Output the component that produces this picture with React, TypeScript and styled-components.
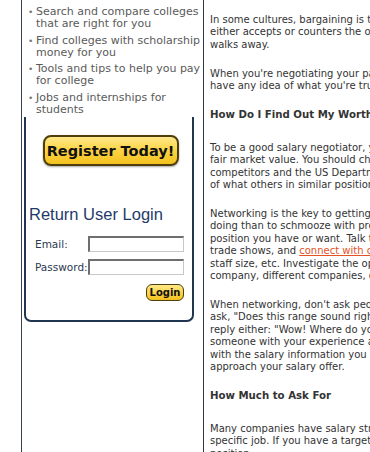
import React from "react";
import styled, { createGlobalStyle } from "styled-components";

const GlobalStyle = createGlobalStyle`
  html, body {
    margin: 0;
    padding: 0;
    background: #ffffff;
    overflow: hidden;
  }
  body {
    font-family: "DejaVu Sans", Verdana, sans-serif;
  }
`;

const Page = styled.div`
  display: flex;
  align-items: stretch;
  width: 700px;
  height: 452px;
  padding-left: 21px;
`;

const Sidebar = styled.div`
  width: 177px;
  flex-shrink: 0;
  border-left: 1px solid #3a4250;
  padding-left: 2px;
  display: flex;
  flex-direction: column;
`;

const PerkList = styled.ul`
  list-style: none;
  margin: 6px 0 0;
  padding: 0 0 0 4px;
`;

const Perk = styled.li`
  position: relative;
  padding-left: 8px;
  margin-bottom: 4.5px;
  font-size: 11px;
  line-height: 12px;
  color: #5a5a5a;

  &::before {
    content: "•";
    position: absolute;
    left: 0;
    top: 0;
    font-size: 9px;
    color: #777;
  }
`;

const LoginBox = styled.div`
  margin-top: -3px;
  width: 166px;
  border: 2.5px solid #1f3550;
  border-top: none;
  border-radius: 0 0 7px 7px;
  padding: 18px 0 19px;
  display: flex;
  flex-direction: column;
  align-items: center;
`;

const RegisterButton = styled.button`
  width: 136px;
  height: 31px;
  border: 2px solid #4d3f0c;
  border-radius: 8px;
  background: linear-gradient(#ffe88a 0%, #fcd54a 45%, #f4c21f 100%);
  box-shadow: 0 1px 2px rgba(0, 0, 0, 0.35);
  font-family: "DejaVu Sans", Verdana, sans-serif;
  font-weight: bold;
  font-size: 14.5px;
  color: #111;
  padding: 0;
  cursor: pointer;
  margin-left: 3px;
`;

const LoginTitle = styled.h2`
  align-self: flex-start;
  margin: 38px 0 12px 3px;
  font-family: "Liberation Sans", Arial, sans-serif;
  font-weight: normal;
  font-size: 16.5px;
  line-height: 20px;
  color: #1f3a6a;
`;

const FieldRow = styled.label`
  align-self: stretch;
  display: flex;
  align-items: center;
  justify-content: space-between;
  padding: 0 8px 0 9px;
  margin-bottom: 7px;
`;

const FieldLabel = styled.span`
  font-size: 10.5px;
  color: #2b3950;
`;

const FieldInput = styled.input<{ $width: number }>`
  width: ${(p) => p.$width}px;
  height: 16px;
  box-sizing: border-box;
  border: 1px solid #c8c8c8;
  border-top: 2px solid #6e6e6e;
  border-left: 2px solid #6e6e6e;
  padding: 0 2px;
  background: #fff;
`;

const LoginButton = styled.button`
  align-self: flex-end;
  margin: 2px 8px 0 0;
  width: 38px;
  height: 17px;
  padding: 0;
  border: 1.5px solid #4d3f0c;
  border-radius: 6px;
  background: linear-gradient(#ffe88a 0%, #fcd54a 50%, #f4c21f 100%);
  font-family: "DejaVu Sans", Verdana, sans-serif;
  font-weight: bold;
  font-size: 10px;
  color: #111;
`;

const Article = styled.div`
  flex: 1;
  border-left: 1px solid #2e3644;
  margin-left: 2px;
  padding: 14px 0 0 6px;
  overflow: hidden;
`;

const Para = styled.p`
  margin: 0 0 16.5px;
  font-size: 10px;
  line-height: 12.4px;
  color: #333;
  white-space: pre;
`;

const Heading = styled.h3`
  margin: 0 0 20.5px;
  font-size: 10.2px;
  line-height: 12.4px;
  font-weight: bold;
  color: #333;
  white-space: pre;
`;

const Link = styled.a`
  color: #e2531f;
  text-decoration: underline;
`;

export default function App() {
  return (
    <>
      <GlobalStyle />
      <Page>
        <Sidebar>
          <PerkList>
            <Perk>Search and compare colleges that are right for you</Perk>
            <Perk>Find colleges with scholarship money for you</Perk>
            <Perk>Tools and tips to help you pay for college</Perk>
            <Perk>Jobs and internships for students</Perk>
          </PerkList>
          <LoginBox>
            <RegisterButton>Register Today!</RegisterButton>
            <LoginTitle>Return User Login</LoginTitle>
            <FieldRow>
              <FieldLabel>Email:</FieldLabel>
              <FieldInput type="text" $width={96} />
            </FieldRow>
            <FieldRow>
              <FieldLabel>Password:</FieldLabel>
              <FieldInput type="password" $width={96} />
            </FieldRow>
            <LoginButton>Login</LoginButton>
          </LoginBox>
        </Sidebar>
        <Article>
          <Para>
            {"In some cultures, bargaining is the way business gets done. The buyer names a price and the seller\neither accepts or counters the offer, and they go back and forth until they agree or the buyer\nwalks away."}
          </Para>
          <Para>
            {"When you're negotiating your pay, it works the same way, but you can't bargain well if you don't\nhave any idea of what you're truly worth."}
          </Para>
          <Heading>How Do I Find Out My Worth?</Heading>
          <Para>
            {"To be a good salary negotiator, you need to do your homework and find out your\nfair market value. You should check salary surveys, job postings from the employer's\ncompetitors and the US Department of Labor's Occupational Outlook Handbook to get a sense\nof what others in similar positions are earning."}
          </Para>
          <Para>
            {"Networking is the key to getting salary information. There's no better way to learn what you should be\ndoing than to schmooze with professionals who already work in the field and hold the\nposition you have or want. Talk to people at professional association meetings, conferences,\ntrade shows, and "}
            <Link href="#">connect with coworkers</Link>
            {" online. Ask about pay ranges, benefits,\nstaff size, etc. Investigate the opportunities for advancement, whether it's within the same\ncompany, different companies, or a different industry altogether."}
          </Para>
          <Para>
            {"When networking, don't ask people outright how much money they make. Instead,\nask, \"Does this range sound right for someone in this position?\" Most people will\nreply either: \"Wow! Where do you get those numbers?\" or \"That sounds about right for\nsomeone with your experience and education.\" Armed\nwith the salary information you gather, you'll be more confident when you\napproach your salary offer."}
          </Para>
          <Heading>How Much to Ask For</Heading>
          <Para>
            {"Many companies have salary structures with a set range of pay for each\nspecific job. If you have a target salary in mind, find out the range for the\nposition."}
          </Para>
        </Article>
      </Page>
    </>
  );
}
